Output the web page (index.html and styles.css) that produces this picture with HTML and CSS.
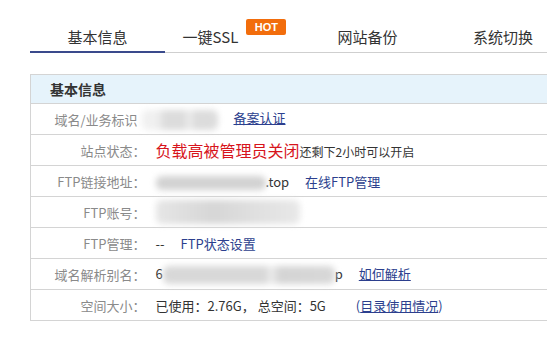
FILE: index.html
```html
<!DOCTYPE html>
<html lang="zh-CN">
<head>
  <meta charset="UTF-8" />
  <title>基本信息</title>
  <link rel="stylesheet" href="styles.css">
</head>
<body>
  <div class="page">
    <ul class="tabs">
      <li class="tab active">基本信息</li>
      <li class="tab"><span class="tab-label">一键SSL<span class="hot">HOT</span></span></li>
      <li class="tab">网站备份</li>
      <li class="tab tab-last">系统切换</li>
    </ul>

    <table class="info">
      <colgroup>
        <col class="col-label">
        <col>
      </colgroup>
      <tr class="head">
        <th colspan="2">基本信息</th>
      </tr>
      <tr>
        <td class="label no-colon">域名/业务标识</td>
        <td class="value"><span class="mask mask-domain"></span><a class="link under" href="#">备案认证</a></td>
      </tr>
      <tr>
        <td class="label">站点状态：</td>
        <td class="value"><span class="alert">负载高被管理员关闭</span><span class="small">还剩下2小时可以开启</span></td>
      </tr>
      <tr>
        <td class="label">FTP链接地址：</td>
        <td class="value"><span class="mask mask-ftp"></span>.top<a class="link gap" href="#">在线FTP管理</a></td>
      </tr>
      <tr>
        <td class="label">FTP账号：</td>
        <td class="value"><span class="mask mask-account"></span></td>
      </tr>
      <tr>
        <td class="label">FTP管理：</td>
        <td class="value">--<a class="link gap" href="#">FTP状态设置</a></td>
      </tr>
      <tr>
        <td class="label">域名解析别名：</td>
        <td class="value">6<span class="mask mask-alias"></span>p<a class="link under gap" href="#">如何解析</a></td>
      </tr>
      <tr>
        <td class="label">空间大小：</td>
        <td class="value">已使用：2.76G，&nbsp;总空间：5G<a class="link gap wide" href="#">(<u>目录使用情况</u>)</a></td>
      </tr>
    </table>
  </div>
</body>
</html>
```

FILE: styles.css
```css
body {
  margin: 0;
  background: #fff;
  font-family: "Noto Sans CJK SC", "Liberation Sans", sans-serif;
  color: #333;
  overflow: hidden;
}
.page {
  padding: 22px 0 0 30px;
}
.tabs {
  list-style: none;
  margin: 0;
  padding: 0;
  display: flex;
  border-bottom: 1px solid #cfcfcf;
}
.tab {
  width: 135px;
  flex-shrink: 0;
  height: 29px;
  line-height: 29px;
  text-align: center;
  font-size: 15px;
  color: #333;
  white-space: nowrap;
}
.tab-last {
  width: 74px;
  padding-left: 38px;
  text-align: left;
}
.tab.active {
  border-bottom: 2px solid #3a4a8c;
  margin-bottom: -1px;
}
.tab-label {
  position: relative;
  padding-right: 48px;
  margin-left: 4px;
}
.hot {
  position: absolute;
  right: 0;
  top: -7px;
  width: 40px;
  height: 16px;
  line-height: 16px;
  background: #f26d0c;
  color: #fff;
  font-size: 11px;
  font-weight: bold;
  font-family: "Liberation Sans", sans-serif;
  border-radius: 2px;
  text-align: center;
}
.info {
  margin-top: 21px;
  width: 517px;
  table-layout: fixed;
  border-collapse: collapse;
  font-size: 13px;
}
.col-label {
  width: 125px;
}
.info th {
  background: #e6f3fb;
  border: 1px solid #d4d4d4;
  border-right: none;
  height: 28px;
  padding: 0 0 0 19px;
  text-align: left;
  font-size: 14px;
  font-weight: bold;
  color: #333;
}
.info td {
  border-top: 1px solid #d4d4d4;
  border-bottom: 1px solid #d4d4d4;
  height: 30px;
  padding: 0;
  white-space: nowrap;
  overflow: visible;
}
.info td.label {
  padding-right: 10px;
  text-align: right;
  color: #8a8a8a;
  border-left: 1px solid #d4d4d4;
}
.info td.label.no-colon {
  padding-right: 18px;
}
.info td.value {
  color: #333;
}
.link {
  color: #2c3f8e;
  text-decoration: none;
}
.link.under {
  text-decoration: underline;
}
.gap {
  margin-left: 16px;
}
.gap.wide {
  margin-left: 30px;
}
.alert {
  color: #d7141c;
  font-size: 16px;
}
.small {
  font-size: 12px;
}
.mask {
  display: inline-block;
  vertical-align: middle;
  background: #d9d9d9;
  filter: blur(3px);
  border-radius: 6px;
}
.mask-domain {
  width: 76px;
  height: 20px;
  margin: 0 16px 0 -14px;
  background: linear-gradient(90deg, #f0f0f0 0, #f0f0f0 20%, #dcdcdc 30%, #dcdcdc 55%, #eeeeee 62%, #dcdcdc 70%);
}
.mask-ftp {
  width: 110px;
  height: 14px;
  background: #d2d2d2;
}
.mask-account {
  width: 144px;
  height: 24px;
  background: linear-gradient(90deg, #e6e6e6, #d6d6d6 40%, #e0e0e0 70%, #e8e8e8);
}
.mask-alias {
  width: 172px;
  height: 18px;
  background: linear-gradient(90deg, #d8d8d8, #d8d8d8 60%, #efefef 62%, #d4d4d4 68%, #d8d8d8);
}
```
